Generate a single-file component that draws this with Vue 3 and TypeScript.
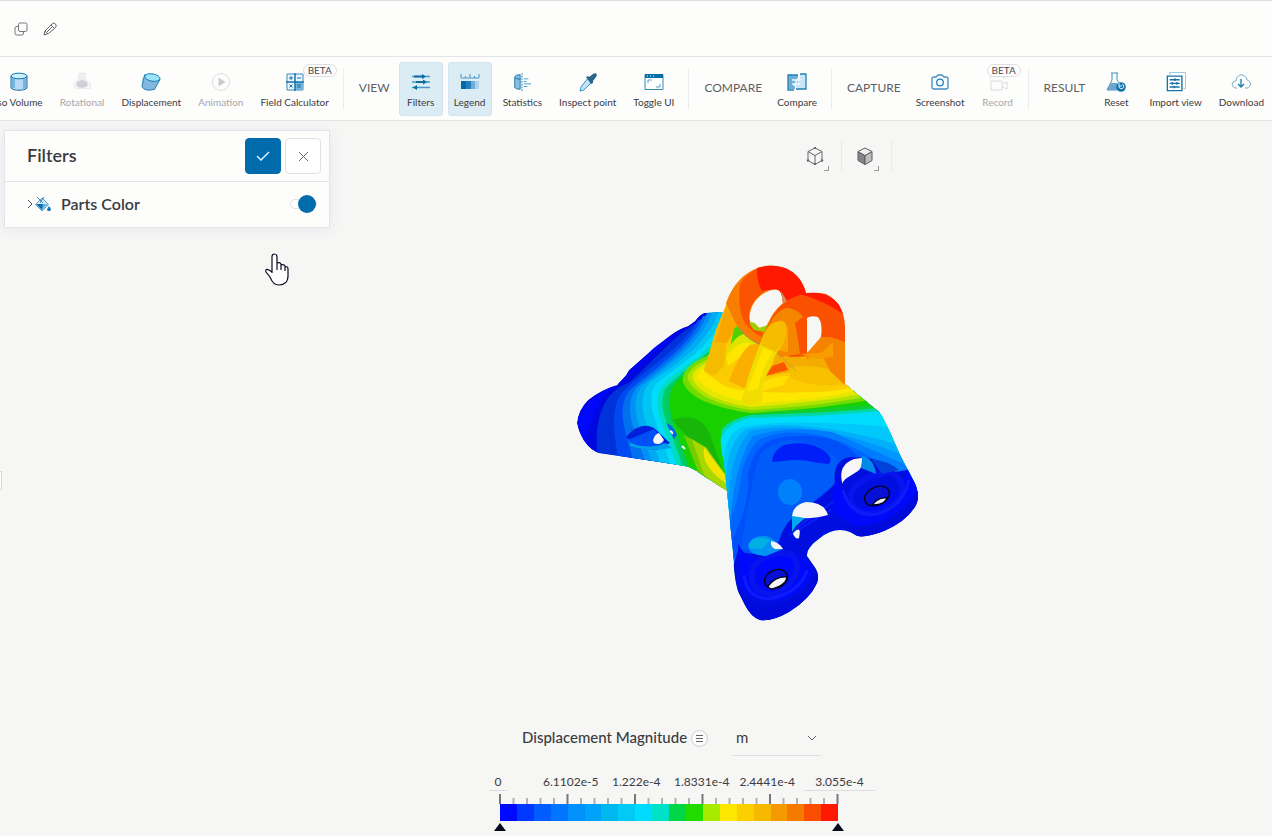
<script setup lang="ts">
import { ref } from 'vue'

interface Tool {
  label: string
  icon: string
  disabled?: boolean
  active?: boolean
  beta?: boolean
}
interface Group {
  title: string
  tools: Tool[]
}

const groups: Group[] = [
  {
    title: '',
    tools: [
      { label: 'Iso Volume', icon: 'volume' },
      { label: 'Rotational', icon: 'rotational', disabled: true },
      { label: 'Displacement', icon: 'displacement' },
      { label: 'Animation', icon: 'animation', disabled: true },
      { label: 'Field Calculator', icon: 'calculator', beta: true },
    ],
  },
  {
    title: 'VIEW',
    tools: [
      { label: 'Filters', icon: 'filters', active: true },
      { label: 'Legend', icon: 'legend', active: true },
      { label: 'Statistics', icon: 'statistics' },
      { label: 'Inspect point', icon: 'inspect' },
      { label: 'Toggle UI', icon: 'toggle' },
    ],
  },
  { title: 'COMPARE', tools: [{ label: 'Compare', icon: 'compare' }] },
  {
    title: 'CAPTURE',
    tools: [
      { label: 'Screenshot', icon: 'screenshot' },
      { label: 'Record', icon: 'record', disabled: true, beta: true },
    ],
  },
  {
    title: 'RESULT',
    tools: [
      { label: 'Reset', icon: 'reset' },
      { label: 'Import view', icon: 'import' },
      { label: 'Download', icon: 'download' },
    ],
  },
]

const partsColor = ref(true)
const unit = ref('m')
const minValue = ref('0')
const maxValue = ref('3.055e-4')
const midValues = ['6.1102e-5', '1.222e-4', '1.8331e-4', '2.4441e-4']
const scale = [
  '#0009ff', '#0038ff', '#005cff', '#0076ff', '#0092fa', '#00a2fa', '#00b8f0', '#00caf5', '#00dcff', '#00e2c8',
  '#00d646', '#22dc00', '#a8ea00', '#fce800', '#fccf00', '#f7b800', '#f59a00', '#f47a00', '#fb4d00', '#ff1800',
]
const ticks = Array.from({ length: 26 }, (_, i) => ({ x: i * 13.5, major: i % 5 === 0 }))

const body =
  'M722 312L704 313Q699 315 695 321L688 326Q678 329 668 337L655 347L629 370L626 375L617 385Q600 390 588 400Q578 410 577 423Q578 431 584 441Q591 451 599 453L660 462L685 466Q692 467 701 474L727 491L728 500L760 500L880 430L880 413L845 384L798 375L760 345L728 325Z'

const sideBands = [
  { c: '#0032da', d: 'M694 324C670 340 650 364 630 382C614 389 594 400 597 454L900 520L900 300Z' },
  { c: '#0048f2', d: 'M698 320C680 350 650 366 628 387C610 400 612 425 620 470L900 520L900 300Z' },
  { c: '#0070ee', d: 'M703 316C689 348 652 370 629 391C616 410 625 430 636 470L900 520L900 300Z' },
  { c: '#0090f6', d: 'M708 310C698 345 660 368 636 388C622 410 635 430 648 470L900 520L900 300Z' },
  { c: '#00abf3', d: 'M714 308C702 345 664 368 641 387C627 410 642 430 655 470L900 520L900 300Z' },
  { c: '#00c5f2', d: 'M720 308C709 344 675 365 650 382C632 402 650 432 665 475L900 520L900 300Z' },
  { c: '#00dcfa', d: 'M724 312C714 348 676 366 655 385C642 408 665 432 672 475L900 520L900 300Z' },
  { c: '#00dcc0', d: 'M724 324C714 352 680 366 662 386C648 410 671 432 678 475L900 520L900 300Z' },
  { c: '#00cc60', d: 'M724 331C714 354 684 368 665 389C655 413 677 436 684 475L900 520L900 300Z' },
  { c: '#18d000', d: 'M724 338C714 356 686 368 672 388C663 412 682 440 691 475L900 520L900 300Z' },
  { c: '#17b608', d: 'M672 420Q700 410 710 435L722 468L708 466Q692 440 672 420Z' },
  { c: '#76cc00', d: 'M684 435L706 447L728 478L728 495L699 474Z' },
  { c: '#a8d800', d: 'M692 439L707 449L728 484L728 495L704 475Z' },
  { c: '#f2e400', d: 'M704 447Q710 455 727 477L727 484Q716 477 710 469Q702 459 704 447Z' },
  { c: '#72db00', d: 'M709 355Q680 367 683 382Q690 404 750 413Q820 409 870 400L845 350Z' },
  { c: '#b2e200', d: 'M709 359Q685 369 688 380Q699 402 750 410Q820 406 865 397L845 350Z' },
  { c: '#e6e700', d: 'M709 362Q689 371 693 380Q704 400 751 407Q820 402 861 394L845 350Z' },
  { c: '#ffe800', d: 'M709 365Q695 373 698 379Q713 397 755 403Q820 400 857 390L845 350Z' },
  { c: '#fbd000', d: 'M711 364Q711 383 730 388Q760 394 800 392Q830 393 850 388L840 350L735 330Z' },
]

const front =
  'M727 491L724 462Q718 438 723 427Q735 414 780 411L867 405Q878 408 882 416L890 432L900 455L912 478Q921 493 916 505Q907 521 884 531Q866 538 857 536L850 532Q835 526 820 538Q806 548 807 556L814 566Q820 574 817 583Q810 599 789 612Q771 622 760 620Q751 617 745 605L738 591Q734 579 733 552Z'

const frontBands = [
  { c: '#00d8a8', d: 'M717 440Q721 421 750 415Q810 414 880 408L925 500L720 500Z' },
  { c: '#00dcfc', d: 'M720 442Q724 424 750 418Q810 417 883 411L925 500L720 500Z' },
  { c: '#00c8fa', d: 'M724 462Q724 436 742 427Q790 418 890 427L925 500L720 530Z' },
  { c: '#00b0fa', d: 'M726 480Q727 442 746 429Q800 417 896 444L925 500L720 540Z' },
  { c: '#0098ff', d: 'M728 500Q732 447 751 431Q810 418 900 454L925 500L730 550Z' },
  { c: '#007cff', d: 'M730 522Q735 462 753 436Q790 425 832 432L904 464L925 500L730 560Z' },
  { c: '#0064ff', d: 'M729 525Q740 495 741 475Q749 444 763 438Q798 425 844 443L892 468L900 500L735 570Z' },
  { c: '#0050fa', d: 'M732 540Q751 502 748 474Q754 440 784 437Q836 431 856 455L880 468L880 500L737 575Z' },
  { c: '#005cf8', d: 'M741 550Q751 480 760 455Q770 442 790 440Q825 443 840 463L836 482L800 512L776 545Z' },
]
</script>

<template>
  <div class="page">
    <svg class="sheet" aria-hidden="true">
      <symbol id="volume" viewBox="0 0 20 20">
        <path d="M2 4v12c2 3 14 3 16 0V4" fill="#b8d9f3" stroke="#176fa8" />
        <path d="M3 6v10h3V7zM14 7v11l3-2V6z" fill="#73b5e0" />
        <ellipse cx="10" cy="4" rx="8" ry="2.800" fill="#c8f3fc" stroke="#176fa8" />
      </symbol>
      <symbol id="rotational" viewBox="0 0 24 24">
        <path d="M2 15c0-7 20-7 20 0v5H8c-4 0-6-2-6-5z" fill="#f7f5f8" stroke="#e5e5ea" />
        <path d="M8 2q4-2 8 0v12H8z" fill="#f1eff2" stroke="#e8e5e9" />
        <path d="M5 15q0-4 4-4l3-2 3 2q4 0 4 4-1 4-7 4t-7-4z" fill="#cfd1d5" />
      </symbol>
      <symbol id="displacement" viewBox="0 0 22 20">
        <path d="M2 4q-1 8 0 12" fill="none" stroke="#b5d6e7" />
        <path d="M4 2L1 15q3 6 14 3l6-11z" fill="#82b7df" stroke="#1878ad" />
        <ellipse cx="12.500" cy="5" rx="8.500" ry="4" transform="rotate(10 12 5)" fill="#9ce4fb" stroke="#1878ad" />
      </symbol>
      <symbol id="animation" viewBox="0 0 20 20">
        <circle cx="10" cy="10" r="8.500" fill="none" stroke="#dcdce0" />
        <path d="M7.500 5.500v9l7-4.500z" fill="#c9cbd0" />
      </symbol>
      <symbol id="calculator" viewBox="0 0 20 20">
        <path d="M2 2h16v16H2z" fill="#e9f6fd" stroke="#3a88b6" />
        <path d="M10 10h8v8h-8z" fill="#78b5de" />
        <path d="M10 1v18M1 10h18" stroke="#1774a9" stroke-width="1.500" />
        <path d="M4 6h4M6 4v4M12 6h4M4.500 12.500l3 3m0-3l-3 3M12 13h4m-4 2h4" stroke="#1673a9" />
      </symbol>
      <symbol id="filters" viewBox="0 0 20 20">
        <path d="M1 4.500h18M1 10h18M1 15.500h18" stroke="#4997c5" stroke-width="1.300" />
        <path d="M11 2l4 2.500-4 2.500zM12 7.500l4 2.500-4 2.500zM6 13v5l-4-2.500z" fill="#006ba7" />
        <path d="M3 4.500h10M5 10h9" stroke="#126ca0" stroke-width="2" />
      </symbol>
      <symbol id="legend" viewBox="0 0 20 20">
        <path d="M1 2v4h18V2M5.500 4v2M10 2v4M14.500 4v2" fill="none" stroke="#4a96c3" />
        <path d="M1 9h5v8H1z" fill="#006ba8" /><path d="M6 9h5v8H6z" fill="#2180bc" />
        <path d="M11 9h4v8h-4z" fill="#71add6" /><path d="M15 9h4v8h-4z" fill="#afd2ed" />
      </symbol>
      <symbol id="statistics" viewBox="0 0 20 22">
        <path d="M8 3C4 3 2 4 2 6v11q1 2 6 2z" fill="#8bbfe2" stroke="#1d75a5" />
        <path d="M2 6q2 2 6 2" fill="none" stroke="#1d75a5" />
        <path d="M10 1v20" stroke="#267fab" stroke-dasharray="2 1" />
        <path d="M12 7.500h5M12 10.500h3M12 13h8M12 16h4" stroke="#4196c6" />
      </symbol>
      <symbol id="inspect" viewBox="0 0 20 20">
        <path d="M10 6l4 4-8 8-4 1 1-4z" fill="#c1e3f8" stroke="#3b91be" />
        <path d="M8 5l2-1 1 1 4-3c3-2 5 1 3 3l-3 4v2l-2 1z" fill="#29658a" />
      </symbol>
      <symbol id="toggle" viewBox="0 0 20 20">
        <path d="M1 2.500h18v15H1z" fill="#fff" stroke="#328bb9" />
        <path d="M1 2h18v4H1z" fill="#076ea7" />
        <path d="M3 4h1m2 0h1m2 0h1" stroke="#fff" /><path d="M4 11V8h4M12 15h4v-3" fill="none" stroke="#56a1c9" />
      </symbol>
      <symbol id="compare" viewBox="0 0 20 20">
        <path d="M1 3h10v9H8v5H1z" fill="#6faed7" /><path d="M13 2h6v15H9v-4l4-8z" fill="#c9e6f6" />
        <path d="M13 2h6v15H9M11 3H1v15h6" fill="none" stroke="#2380b3" stroke-width="1.300" />
        <path d="M5 8h9m-9 4h8m-6 2l4-8" stroke="#eefaff" stroke-width="1.500" />
      </symbol>
      <symbol id="screenshot" viewBox="0 0 20 20">
        <path d="M4 5h2l2-2h4l2 2h2q2 0 2 2v8q0 2-2 2H4q-2 0-2-2V7q0-2 2-2z" fill="#f5fbff" stroke="#448fbd" stroke-width="1.300" />
        <circle cx="10" cy="10.500" r="3.300" fill="none" stroke="#2580b7" stroke-width="1.300" />
      </symbol>
      <symbol id="record" viewBox="0 0 20 20">
        <path d="M3 9h11v9H3zM14 12l5-2v7l-5-2M2 7q0-3 3-3 2-3 5 0 5-2 6 3" fill="none" stroke="#d9dadd" />
      </symbol>
      <symbol id="reset" viewBox="0 0 20 20">
        <path d="M5 1h7M6 1v7l-5 10h10M11 1v7l3 4" fill="none" stroke="#448fbb" />
        <path d="M5 11h6l2 7H1z" fill="#6da6cd" />
        <circle cx="15" cy="15" r="4.800" fill="#1473a8" />
        <path d="M13 14a2.400 2.400 0 1 0 3-2M13 11v3h3" fill="none" stroke="#ddf5ff" />
      </symbol>
      <symbol id="import" viewBox="0 0 22 22">
        <path d="M4 3V0.500h17.500v18H19" fill="none" stroke="#8bc5df" />
        <path d="M1.500 4.500h16v16h-16z" fill="#fff" stroke="#1673a8" stroke-width="1.500" />
        <path d="M4 8.500h11M4 12.500h11M4 16.500h11M10 7v3M7 11v3M12 11v3M9 15v3" stroke="#1673a8" stroke-width="1.500" />
      </symbol>
      <symbol id="download" viewBox="0 0 20 20">
        <path d="M6 16H5C0 16 0 9 5 9c0-8 10-8 11-1 5 1 4 8 0 8h-2" fill="none" stroke="#78aacc" />
        <path d="M10 7v8m-3-3l3 3 3-3" fill="none" stroke="#187bad" stroke-width="1.300" />
      </symbol>
    </svg>

    <header class="titlebar">
      <button class="plain" aria-label="Duplicate">
        <svg width="14" height="14" viewBox="0 0 14 14" fill="none" stroke="#77777c">
          <rect x="4.500" y="1" width="8.500" height="8.500" rx="1.500" />
          <path d="M4.500 4.500H3Q1 4.500 1 6v5.500Q1 13 3 13h5q1.500 0 1.500-2V9.500" />
        </svg>
      </button>
      <button class="plain" aria-label="Rename">
        <svg width="14" height="14" viewBox="0 0 14 14" fill="none" stroke="#626268">
          <path d="M1 13l1-4 7-7q2-2 3.500 0t0 3.500l-7 6zM2 9l3 3M8 3l3 3M4 10l6-6" />
        </svg>
      </button>
    </header>

    <nav class="toolbar" aria-label="Post-processing tools">
      <section v-for="group in groups" :key="group.title" class="group">
        <h2 v-if="group.title">{{ group.title }}</h2>
        <button
          v-for="tool in group.tools"
          :key="tool.label"
          class="tool"
          :class="{ active: tool.active }"
          :disabled="tool.disabled"
        >
          <svg class="icon" aria-hidden="true"><use :href="'#' + tool.icon" /></svg>
          <span>{{ tool.label }}</span>
          <em v-if="tool.beta" class="beta">BETA</em>
        </button>
      </section>
    </nav>

    <main class="viewport">
      <svg class="model" width="360" height="375" viewBox="570 255 360 375" role="img" aria-label="Displacement result on the part">
        <defs>
          <clipPath id="bodyClip"><path :d="body" /></clipPath>
          <clipPath id="frontClip"><path :d="front" /></clipPath>
        </defs>
        <g clip-path="url(#bodyClip)">
          <path :d="body" fill="#0008df" />
          <path d="M630 375Q660 343 692 325L655 347L620 383Q582 398 577 423L584 441L593 416Q602 392 630 375" fill="#0008fb" />
          <path v-for="band in sideBands" :key="band.d" :d="band.d" :fill="band.c" />
        </g>
        <path d="M626 437Q640 421 654 428L670 443L662 448L640 446L628 439" fill="#001fdc" />
        <path d="M628 440L654 429L666 445L657 450L638 448Z" fill="#0050fa" />
        <path d="M630 443Q650 450 666 443L672 448Q650 452 630 446" fill="#00a0e8" />
        <path d="M666 423Q673 425 677 435L674 439Q670 431 666 423" fill="#0062e8" />
        <path d="M653 440Q655 434 659 433L664 440Q660 446 654 443Z" fill="#f5f5f5" />
        <path d="M670 431q3 1 2 3M682 446l3 3" stroke="#eefdff" stroke-width="2" />

        <!-- legs and web below the lugs -->
        <path d="M704 372L716 330L727 303L740 322L765 329L768 322L790 305L806 318V354L818 344L832 334L845 338V386Q808 394 775 392Q725 389 704 372Z" fill="#fbcc00" />
        <path d="M704 370L716 330L727 303L736 322L726 345L724 366L714 376Z" fill="#f5bb00" />
        <path d="M727 303L737 325L727 343L715 342Z" fill="#f9a700" />
        <path d="M731 342L734 329L740 323L752 336L760 342L733 352Z" fill="#50d000" />
        <path d="M727 352Q735 335 745 334L758 344L742 352L727 362Z" fill="#dce400" />
        <path d="M726 357Q738 340 751 343L746 353L728 366Z" fill="#ffe600" />
        <path d="M729 381Q740 352 750 345L765 342L757 366Q750 385 744 388Z" fill="#f9ae00" />
        <path d="M776 352L806 358L832 336L845 342V374Q830 380 815 375L790 372L770 376Z" fill="#f5ac00" />
        <path d="M790 368Q812 362 845 374V384Q815 388 790 378Z" fill="#f8be00" />
        <path d="M766 376L772 366L784 362L788 370L776 373Z" fill="#fa5600" />

        <!-- lug at the back -->
        <path fill-rule="evenodd" d="M726 303Q736 275 760 267Q779 262 796 275Q803 282 806 293L792 300L776 311L768 325L766 345L758 344Q743 337 736 324ZM749 322Q749 305 760 296Q772 287 780 291L782 296L783 303Q772 312 768 324Q765 330 757 328Q751 327 749 322Z" fill="#f87d00" />
        <path d="M740 284Q747 273 757 269L765 291Q754 298 750 309Q747 321 754 327L764 329L762 337Q745 329 741 313Q738 299 740 284Z" fill="#fa5200" />
        <path d="M757 268Q783 261 797 276Q803 282 806 293L787 301L783 302Q782 290 776 289L762 291Q757 284 757 268Z" fill="#ff1900" />
        <path d="M781 291L787 301L783 305Z" fill="#d98a55" />
        <path d="M749 323Q754 320 759 328L768 325L764 332L754 330Z" fill="#a0cc00" />
        <path d="M740 328Q747 339 759 344" fill="none" stroke="#b08a58" />

        <!-- lug in front -->
        <path fill-rule="evenodd" d="M766 330Q773 309 790 299Q808 290 826 294Q844 303 845 326V348L820 356L790 357L766 345ZM807 318V353Q816 348 821 337Q823 323 818 317Q811 315 807 318Z" fill="#f95100" />
        <path d="M800 294Q827 289 839 305L843 314Q827 302 800 294Z" fill="#ff1900" />
        <path d="M766 330Q777 308 788 308Q799 310 803 317L795 323L798 339L800 354L780 357L768 343Z" fill="#f68600" />
        <path d="M807 353L821 337L831 337L845 342V385L830 371L821 353L806 359Z" fill="#f68300" />
        <path d="M800 354L821 353L833 342L833 357L817 359Z" fill="#f99c00" />
        <path d="M766 335Q771 322 781 320Q789 322 788 335L788 352L775 350L765 345Z" fill="#f7a700" />

        <!-- slanted strut -->
        <path d="M741 402Q751 365 762 339Q770 318 784 323Q790 336 776 354Q763 374 762 402L751 405Z" fill="#f0dc00" />
        <path d="M763 337Q770 318 784 323Q790 336 776 352L761 345Z" fill="#f6bd00" />
        <path d="M747 391L763 348L773 352Q762 367 758 389Z" fill="#ffe700" />
        <path d="M777 353L796 371" stroke="#b99a49" stroke-dasharray="3 1" />
        <path d="M763 382Q775 375 788 376L784 385L762 391Z" fill="#ffe000" />

        <g clip-path="url(#frontClip)">
          <path :d="front" fill="#10ce30" />
          <path v-for="band in frontBands" :key="band.d" :d="band.d" :fill="band.c" />
          <path d="M732 570L738 551Q765 560 779 541Q784 522 800 512Q823 496 835 484Q832 459 851 457L873 459L882 474L926 467V540H850L805 630H735Z" fill="#000fdf" />
          <path d="M738 544Q750 568 781 552Q805 553 812 568Q812 584 788 598Q758 607 740 586Z" fill="#0009fa" />
          <path d="M837 476Q841 504 865 508Q900 505 907 469L925 480V520L870 535L835 514Q828 500 837 476" fill="#0009fa" />
          <path d="M738 591Q757 613 785 602Q811 589 818 568L820 600L780 625H740M840 524Q888 534 918 490V515L865 540Z" fill="#000bdb" />
          <path d="M752 570Q759 555 781 553Q798 552 797 568Q793 588 771 595Q749 592 752 570M850 497Q854 482 873 476L889 472Q905 477 902 495Q892 512 868 514Q852 512 850 497" fill="none" stroke="#0814ee" stroke-width="6" />
          <path d="M744 575Q747 599 770 599Q801 592 807 570M843 490Q850 517 877 514Q903 507 909 480" fill="none" stroke="#0c1cfc" stroke-width="3" />
          <path d="M790 535Q818 518 831 510M794 530Q820 511 833 502" fill="none" stroke="#0820f5" stroke-width="2" />
        </g>
        <path d="M772 462Q772 451 784 445Q811 439 827 453Q833 459 829 464L818 463Q800 458 784 461Z" fill="#001ff8" />
        <ellipse cx="790" cy="492" rx="12" ry="13" fill="#0080fa" />
        <path d="M862 456Q874 458 876 474L861 468Z" fill="#0087e7" />
        <path d="M871 459Q889 461 899 470L882 474Z" fill="#0041db" />
        <path d="M842 482Q838 465 854 459L862 458Q862 469 858 471L850 476Q844 479 842 484Z" fill="#f6f6f6" />
        <path d="M792 518Q792 505 806 502Q824 502 828 515Q812 519 801 518L792 523Z" fill="#f6f6f6" />
        <path d="M792 516L805 518L796 526L792 532Z" fill="#00a9ee" />
        <path d="M794 532Q802 525 799 538Q796 540 793 534Z" fill="#f6f6f6" />
        <path d="M748 545Q752 535 766 536Q774 538 783 549L766 556Q748 555 748 545Z" fill="#0093f4" />
        <path d="M749 544Q755 534 770 540L762 549L750 548Z" fill="#00b0e4" />
        <path d="M771 541Q779 542 783 549L775 549Q770 547 771 541Z" fill="#f6f6f6" />
        <g stroke="#020416" stroke-width="1.300">
          <ellipse cx="776" cy="579" rx="12" ry="9" transform="rotate(-25 776 579)" fill="#0710d4" />
          <path d="M768 586Q776 576 787 577Q786 585 772 589Q769 589 768 586Z" fill="#f7f7f7" />
          <ellipse cx="877" cy="496" rx="13" ry="9" transform="rotate(-25 877 496)" fill="#0710d4" />
          <path d="M873 504Q879 497 887 498Q885 504 875 505Z" fill="#f7f7f7" />
        </g>
      </svg>

      <aside class="panel">
        <header class="panel-head">
          <h1>Filters</h1>
          <button class="square apply" aria-label="Apply">
            <svg width="14" height="10" viewBox="0 0 14 10"><path d="M1 5l4 4 8-8" fill="none" stroke="#d5f2ff" stroke-width="1.500" /></svg>
          </button>
          <button class="square cancel" aria-label="Close">
            <svg width="11" height="11" viewBox="0 0 11 11"><path d="M1 1l9 9M10 1l-9 9" stroke="#67676b" /></svg>
          </button>
        </header>
        <div class="panel-row">
          <button class="plain expand" aria-label="Expand Parts Color">
            <svg width="6" height="8" viewBox="0 0 6 8"><path d="M1 0l4 4-4 4" fill="none" stroke="#4c4d52" /></svg>
          </button>
          <svg class="bucket" width="16" height="16" viewBox="0 0 16 16" aria-hidden="true">
            <path d="M7 2l6.500 6.500L7 15 0.500 8.500z" fill="#d5edfb" stroke="#5ba3cd" />
            <path d="M1 8h10l-4 6z" fill="#0870ae" /><path d="M8 8h5l-6 6z" fill="#69b2e2" />
            <path d="M2 1l6 6M5 7l4-6" stroke="#3b86b0" /><path d="M14 10q4 5 0 5t0-5z" fill="#0879bf" />
          </svg>
          <label for="parts">Parts Color</label>
          <input id="parts" v-model="partsColor" class="switch" type="checkbox" />
        </div>
      </aside>

      <div class="view-modes">
        <button class="mode" aria-label="Projection">
          <svg width="20" height="20" viewBox="0 0 20 20" fill="none" stroke="#66676b">
            <path d="M10 2l7 3.500v9L10 18.500 3 14.500v-9zM3 5.500l7 4 7-4M10 9.500v9" />
            <path d="M10 1v2M2 15l2-1M18 15l-2-1M10 17v2" stroke-width="2" />
          </svg>
        </button>
        <button class="mode" aria-label="Render mode">
          <svg width="20" height="20" viewBox="0 0 20 20" stroke="#5d5d60">
            <path d="M3 5.500l7 4v9l-7-4z" fill="#858589" /><path d="M17 5.500l-7 4v9l7-4z" fill="#bdbdc0" />
            <path d="M10 2l7 3.500-7 4-7-4z" fill="#f0f0f0" />
          </svg>
        </button>
      </div>

      <button class="drawer" aria-label="Open side panel"></button>

      <section class="legend" aria-label="Legend">
        <div class="legend-head">
          <h2>Displacement Magnitude</h2>
          <button class="menu" aria-label="Legend options">
            <svg width="7" height="7" viewBox="0 0 7 7"><path d="M0 .5h7M0 3.500h7M0 6.500h7" stroke="#66676b" /></svg>
          </button>
          <div class="unit">
            <select v-model="unit" aria-label="Unit"><option>m</option><option>mm</option></select>
            <svg width="10" height="6" viewBox="0 0 10 6" aria-hidden="true"><path d="M1 1l4 4 4-4" fill="none" stroke="#67676d" /></svg>
          </div>
        </div>
        <div class="labels">
          <input v-model="minValue" class="min" aria-label="Minimum" />
          <div class="mids"><span v-for="value in midValues" :key="value">{{ value }}</span></div>
          <input v-model="maxValue" class="max" aria-label="Maximum" />
        </div>
        <div class="bar">
          <svg class="ticks" viewBox="0 0 338 10" aria-hidden="true">
            <path
              v-for="tick in ticks"
              :key="tick.x"
              :d="`M${tick.x} ${tick.major ? 0 : 4}V10`"
              :stroke="tick.major ? '#77777a' : '#b1b1b3'"
              stroke-width="2"
            />
          </svg>
          <div class="colors">
            <i v-for="color in scale" :key="color" :style="{ background: color }"></i>
          </div>
          <div class="handles">
            <button aria-label="Lower limit"></button>
            <button aria-label="Upper limit"></button>
          </div>
        </div>
      </section>

      <svg class="cursor" width="26" height="34" viewBox="0 0 26 34" aria-hidden="true">
        <path d="M8 20V4q0-3 2.500-3T13 4v10V10q3-1 4 1v1q3-1 4 1v1q3-1 3 2v7c0 6-4 9-9 9s-7-3-9-8l-4-5q-1-4 3-2l3 2M13 13v4m4-5v5m4-3v4" fill="#fff" stroke="#080a1c" stroke-width="1.200" />
      </svg>
    </main>
  </div>
</template>

<style>
body {
  margin: 0;
}
</style>

<style scoped>
.page {
  display: flex;
  flex-direction: column;
  min-height: 100vh;
  overflow: hidden;
  font-family: Lato, "Liberation Sans", sans-serif;
  color: #3a3b40;
  background: #fdfefc;
}
* {
  box-sizing: border-box;
}
button,
input,
select {
  font: inherit;
  color: inherit;
}
h1,
h2 {
  margin: 0;
}
.sheet {
  position: absolute;
  width: 0;
  height: 0;
}
.titlebar {
  display: flex;
  align-items: center;
  gap: 15px;
  height: 57px;
  padding: 0 14px;
  border-top: 1px solid #dedee0;
  border-bottom: 1px solid #e5e5e7;
}
.plain {
  display: flex;
  padding: 0;
  border: 0;
  background: none;
}
.toolbar {
  display: flex;
  justify-content: flex-end;
  height: 64px;
  padding: 5px 2px 4px 0;
  border-bottom: 1px solid #e3e3e3;
}
.group {
  display: flex;
  flex: none;
  gap: 5px;
}
.group + .group {
  margin-left: 8px;
}
.group + .group::before {
  content: "";
  width: 1px;
  margin: 6px 10px 7px 0;
  background: #ededf0;
}
.group h2 {
  align-self: center;
  margin: 0 4px 2px 0;
  font-size: 12px;
  font-weight: 400;
  line-height: 16px;
  color: #5e5f65;
}
.tool {
  position: relative;
  display: flex;
  flex-direction: column;
  align-items: center;
  min-width: 44px;
  height: 54px;
  padding: 10px 6px 0;
  border: 0;
  border-radius: 4px;
  background: none;
  font-size: 10px;
  line-height: 14px;
  white-space: nowrap;
}
.icon {
  width: 20px;
  height: 20px;
  margin-bottom: 3px;
}
.tool.active {
  background: #dcecf5;
  box-shadow: inset 0 0 0 1px #d2e4ef;
}
.tool:disabled {
  color: #a5a6ac;
}
.beta {
  position: absolute;
  top: 2px;
  left: 50%;
  margin-left: 8px;
  padding: 0 4px;
  border: 1px solid #dedee2;
  border-radius: 7px;
  background: #fdfdfd;
  font-size: 10px;
  font-style: normal;
  line-height: 11px;
  color: #494a50;
}
.tool:disabled .beta {
  margin-left: -11px;
}
.viewport {
  position: relative;
  flex: 1;
  min-height: 715px;
  background: #f6f6f5;
}
.model {
  position: absolute;
  top: 134px;
  left: 570px;
}
.panel {
  position: absolute;
  top: 9px;
  left: 4px;
  width: 326px;
  border: 1px solid #e4e4e8;
  background: #fdfefc;
  box-shadow: 0 2px 12px #e8e8ef;
}
.panel-head {
  display: flex;
  align-items: center;
  height: 51px;
  padding: 0 8px 0 22px;
  border-bottom: 1px solid #e4e4e8;
}
.panel h1 {
  flex: 1;
  padding-bottom: 2px;
  font-size: 18px;
  font-weight: 600;
  line-height: 22px;
}
.square {
  display: flex;
  align-items: center;
  justify-content: center;
  width: 36px;
  height: 36px;
  padding: 0;
  border: 1px solid #e1e1e5;
  border-radius: 4px;
  background: #fff;
}
.apply {
  margin-right: 4px;
  border-color: #006bad;
  background: #006bad;
}
.panel-row {
  display: flex;
  align-items: center;
  height: 45px;
  padding: 0 12px 2px 22px;
}
.bucket {
  margin: 0 10px 0 2px;
}
.panel-row label {
  flex: 1;
  font-size: 16px;
  font-weight: 600;
  line-height: 20px;
}
.switch {
  display: flex;
  align-items: center;
  justify-content: flex-start;
  width: 27px;
  height: 10px;
  margin: 0;
  appearance: none;
  border: 1px solid #e2e2e6;
  border-radius: 5px;
  background: #fff;
}
.switch:checked {
  justify-content: flex-end;
}
.switch::before {
  content: "";
  flex: none;
  width: 18px;
  height: 18px;
  border-radius: 50%;
  background: #006bad;
}
.view-modes {
  position: absolute;
  top: 19px;
  left: 792px;
  display: flex;
}
.mode {
  position: relative;
  width: 50px;
  height: 32px;
  padding: 0 0 0 13px;
  border: 0;
  border-right: 1px solid #eae9ea;
  background: none;
  text-align: left;
}
.mode svg {
  display: block;
}
.mode::after {
  content: "";
  position: absolute;
  right: 12px;
  bottom: 1px;
  width: 4px;
  height: 4px;
  border: solid #98989b;
  border-width: 0 1px 1px 0;
}
.drawer {
  position: absolute;
  top: 350px;
  left: 0;
  width: 2px;
  height: 19px;
  padding: 0;
  border: 1px solid #d9d9dc;
  border-left: 0;
  background: #fff;
}
.legend {
  position: absolute;
  bottom: 5px;
  left: 489px;
  width: 386px;
}
.legend-head {
  display: flex;
  align-items: center;
  height: 36px;
  padding-left: 33px;
}
.legend h2 {
  padding-bottom: 2px;
  font-size: 15px;
  font-weight: 500;
  line-height: 20px;
}
.menu {
  display: flex;
  align-items: center;
  justify-content: center;
  width: 17px;
  height: 17px;
  margin: 0 25px 0 4px;
  padding: 0;
  border: 1px solid #ceced2;
  border-radius: 50%;
  background: #fbfbfb;
}
.unit {
  display: flex;
  align-items: center;
  width: 88px;
  height: 36px;
  padding-right: 4px;
  border-bottom: 1px solid #dedee4;
}
.unit select {
  flex: 1;
  appearance: none;
  padding: 0 3px 1px;
  border: 0;
  background: none;
  font-size: 15px;
  line-height: 20px;
}
.labels {
  display: flex;
  height: 18px;
  margin-top: 17px;
  font-size: 12px;
  line-height: 17px;
}
.labels input {
  padding: 0;
  border: 0;
  border-bottom: 1px solid #dedee2;
  background: none;
  text-align: center;
}
.min {
  width: 18px;
}
.max {
  width: 71px;
}
.mids {
  display: grid;
  grid-template-columns: repeat(4, 1fr);
  flex: 1;
  margin: 0 4px 0 31px;
  text-align: center;
}
.bar {
  width: 338px;
  margin: 3px 0 0 11px;
}
.ticks {
  display: block;
  width: 338px;
  height: 10px;
  overflow: visible;
}
.colors {
  display: flex;
  height: 17px;
}
.colors i {
  flex: 1;
}
.handles {
  display: flex;
  justify-content: space-between;
  margin: 2px -6px 0;
}
.handles button {
  width: 12px;
  height: 8px;
  padding: 0;
  border: 0;
  background: #080a1e;
  clip-path: polygon(50% 0, 100% 100%, 0 100%);
}
.cursor {
  position: absolute;
  top: 132px;
  left: 264px;
}
</style>
